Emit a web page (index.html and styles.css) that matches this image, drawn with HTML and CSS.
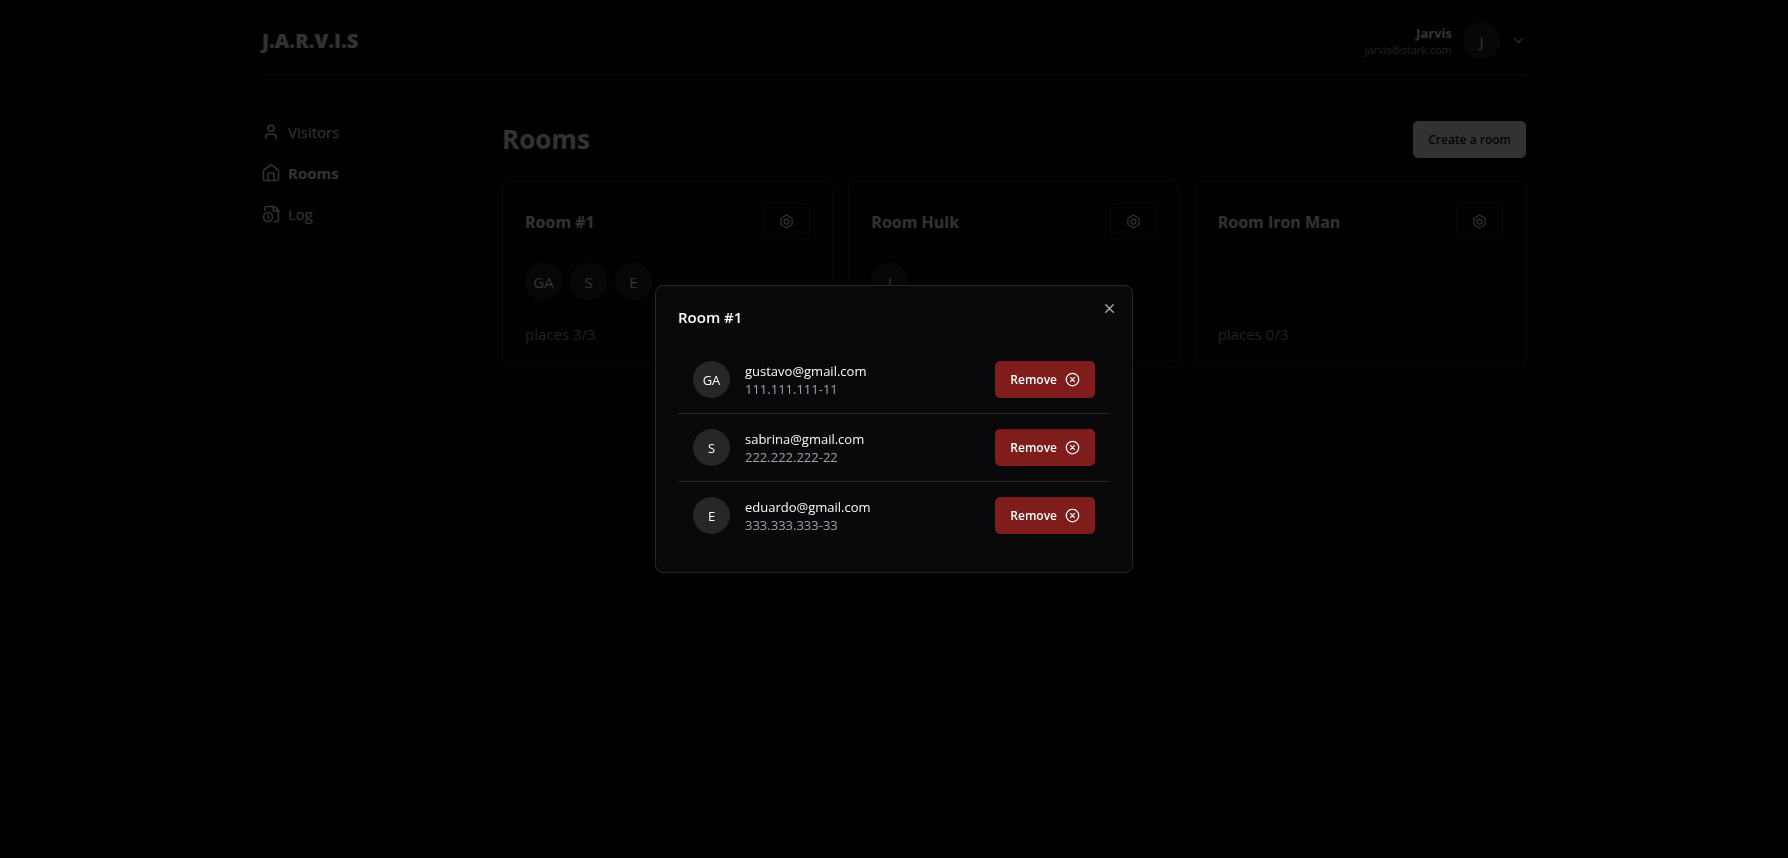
FILE: index.html
```html
<!DOCTYPE html>
<html lang="en">
<head>
<meta charset="utf-8">
<meta name="viewport" content="width=device-width, initial-scale=1">
<title>J.A.R.V.I.S</title>
<link rel="stylesheet" href="styles.css">
</head>
<body>
<svg class="sprite" aria-hidden="true">
  <symbol id="bolt" viewBox="0 0 24 24"><path d="M21 16V8a2 2 0 0 0-1-1.73l-7-4a2 2 0 0 0-2 0l-7 4A2 2 0 0 0 3 8v8a2 2 0 0 0 1 1.73l7 4a2 2 0 0 0 2 0l7-4A2 2 0 0 0 21 16z"/><circle cx="12" cy="12" r="4"/></symbol>
  <symbol id="circle-x" viewBox="0 0 24 24"><circle cx="12" cy="12" r="10"/><path d="m15 9-6 6M9 9l6 6"/></symbol>
</svg>
<div class="page">
  <header class="header">
    <a class="logo" href="#">J.A.R.V.I.S</a>
    <button class="account" type="button">
      <span class="account-text"><strong class="account-name">Jarvis</strong><span class="account-email">jarvis@stark.com</span></span>
      <span class="avatar">J</span>
      <svg class="icon icon-sm" viewBox="0 0 24 24"><path d="m6 9 6 6 6-6"/></svg>
    </button>
  </header>
  <div class="body">
    <nav class="nav">
      <a class="nav-link" href="#"><svg class="icon" viewBox="0 0 24 24"><path d="M19 21v-2a4 4 0 0 0-4-4H9a4 4 0 0 0-4 4v2"/><circle cx="12" cy="7" r="4"/></svg>Visitors</a>
      <a class="nav-link active" href="#" aria-current="page"><svg class="icon" viewBox="0 0 24 24"><path d="M22 9.500a2 2 0 0 0-.8-1.600l-8-6.300a2 2 0 0 0-2.400 0l-8 6.300A2 2 0 0 0 2 9.500V20a2 2 0 0 0 2 2h16a2 2 0 0 0 2-2z"/><path d="M8 22v-8a2 2 0 0 1 2-2h4a2 2 0 0 1 2 2v8"/></svg>Rooms</a>
      <a class="nav-link" href="#"><svg class="icon" viewBox="0 0 24 24"><path d="M16 22h4a2 2 0 0 0 2-2V7l-5-5H6a2 2 0 0 0-2 2v3"/><path d="M15 2v5a1 1 0 0 0 1 1h6"/><circle cx="8" cy="16" r="6"/><path d="M9.500 17.500 8 16.250V14"/></svg>Log</a>
    </nav>
    <main class="main">
      <div class="main-head">
        <h1 class="title">Rooms</h1>
        <button class="button button-primary" type="button">Create a room</button>
      </div>
      <div class="cards">
        <section class="card">
          <div class="card-head"><h2 class="card-title">Room #1</h2><button class="button button-outline" type="button" aria-label="Room #1 settings"><svg class="icon icon-sm"><use href="#bolt"/></svg></button></div>
          <div class="avatars"><span class="avatar">GA</span><span class="avatar">S</span><span class="avatar">E</span></div>
          <p class="places">places 3/3</p>
        </section>
        <section class="card">
          <div class="card-head"><h2 class="card-title">Room Hulk</h2><button class="button button-outline" type="button" aria-label="Room Hulk settings"><svg class="icon icon-sm"><use href="#bolt"/></svg></button></div>
          <div class="avatars"><span class="avatar">I</span></div>
          <p class="places">places 1/3</p>
        </section>
        <section class="card">
          <div class="card-head"><h2 class="card-title">Room Iron Man</h2><button class="button button-outline" type="button" aria-label="Room Iron Man settings"><svg class="icon icon-sm"><use href="#bolt"/></svg></button></div>
          <div class="avatars"></div>
          <p class="places">places 0/3</p>
        </section>
      </div>
    </main>
  </div>
</div>
<div class="overlay">
  <div class="dialog" role="dialog" aria-modal="true" aria-labelledby="dialog-title">
    <button class="close" type="button" aria-label="Close"><svg class="icon icon-sm" viewBox="0 0 24 24"><path d="M18 6 6 18M6 6l12 12"/></svg></button>
    <h2 class="dialog-title" id="dialog-title">Room #1</h2>
    <ul class="people">
      <li class="person"><span class="avatar">GA</span><div class="person-text"><p>gustavo@gmail.com</p><p class="muted">111.111.111-11</p></div><button class="button button-danger" type="button">Remove<svg class="icon icon-sm"><use href="#circle-x"/></svg></button></li>
      <li class="person"><span class="avatar">S</span><div class="person-text"><p>sabrina@gmail.com</p><p class="muted">222.222.222-22</p></div><button class="button button-danger" type="button">Remove<svg class="icon icon-sm"><use href="#circle-x"/></svg></button></li>
      <li class="person"><span class="avatar">E</span><div class="person-text"><p>eduardo@gmail.com</p><p class="muted">333.333.333-33</p></div><button class="button button-danger" type="button">Remove<svg class="icon icon-sm"><use href="#circle-x"/></svg></button></li>
    </ul>
  </div>
</div>
</body>
</html>
```
FILE: styles.css
```css
:root {
  --bg: #09090b;
  --fg: #fafafa;
  --muted: #a1a1aa;
  --line: #27272a;
  --danger: #7f1d1d;
}
* { box-sizing: border-box; margin: 0; padding: 0; }
body {
  background: var(--bg);
  color: var(--fg);
  font: 15px/22px "Segoe UI", "Open Sans", "Noto Sans", sans-serif;
}
a { color: inherit; text-decoration: none; }
button { font: inherit; color: inherit; background: none; border: 0; cursor: pointer; }
.sprite { display: none; }
.icon {
  width: 18px; height: 18px; flex: none;
  fill: none; stroke: currentColor; stroke-width: 2;
  stroke-linecap: round; stroke-linejoin: round;
}
.icon-sm { width: 15px; height: 15px; }
.muted { color: var(--muted); }

.page { max-width: 1308px; margin: 0 auto; padding: 0 22px; }
.header {
  display: flex; align-items: center; justify-content: space-between;
  padding: 22px 0 16px; border-bottom: 1px solid var(--line);
}
.logo { font-size: 20px; font-weight: 800; }
.account { display: flex; align-items: center; gap: 11px; }
.account-text { display: flex; flex-direction: column; text-align: right; }
.account-name { font-size: 13px; line-height: 18px; font-weight: 700; }
.account-email { font-size: 11px; line-height: 16px; color: var(--muted); }
.avatar {
  width: 37px; height: 37px; flex: none; border-radius: 50%;
  display: flex; align-items: center; justify-content: center;
  background: var(--line);
}
.body { display: flex; padding-top: 45px; }
.nav { width: 240px; flex: none; display: flex; flex-direction: column; gap: 19px; }
.nav-link { display: flex; align-items: center; gap: 8px; }
.nav-link.active { font-weight: 700; }
.main { flex: 1; min-width: 0; }
.main-head { display: flex; align-items: center; justify-content: space-between; margin-bottom: 22px; }
.title { font-size: 26px; line-height: 37px; font-weight: 700; }
.button {
  height: 37px; padding: 0 15px; border-radius: 5px;
  display: inline-flex; align-items: center; justify-content: center; gap: 8px;
  font-size: 12px; font-weight: 600;
}
.button-primary { background: var(--fg); color: #18181b; }
.button-outline { border: 1px solid var(--line); }
.button-danger { background: var(--danger); }
.cards { display: grid; grid-template-columns: repeat(3, 1fr); gap: 15px; }
.card {
  border: 1px solid var(--line); border-radius: 8px; padding: 22px;
  display: flex; flex-direction: column; gap: 23px;
}
.card-head { display: flex; align-items: center; justify-content: space-between; }
.card-title { font-size: 16px; font-weight: 700; }
.avatars { display: flex; gap: 8px; min-height: 37px; }
.places { color: var(--muted); }

.overlay {
  position: fixed; inset: 0; display: grid; place-items: center; padding: 15px;
  background: rgb(0 0 0 / 80%);
}
.dialog {
  position: relative; width: 100%; max-width: 478px; padding: 22px 22px 23px;
  background: var(--bg); border: 1px solid var(--line); border-radius: 8px;
  box-shadow: 0 10px 15px -3px rgb(0 0 0 / 10%), 0 4px 6px -4px rgb(0 0 0 / 10%);
}
.close { position: absolute; top: 15px; right: 15px; display: flex; opacity: .7; }
.dialog-title { font-size: 15px; line-height: 18px; font-weight: 600; margin-bottom: 20px; }
.people { list-style: none; font-size: 13px; line-height: 18px; }
.person { display: flex; align-items: center; gap: 15px; padding: 15px; }
.person + .person { border-top: 1px solid var(--line); }
.person-text { flex: 1; min-width: 0; }
```
